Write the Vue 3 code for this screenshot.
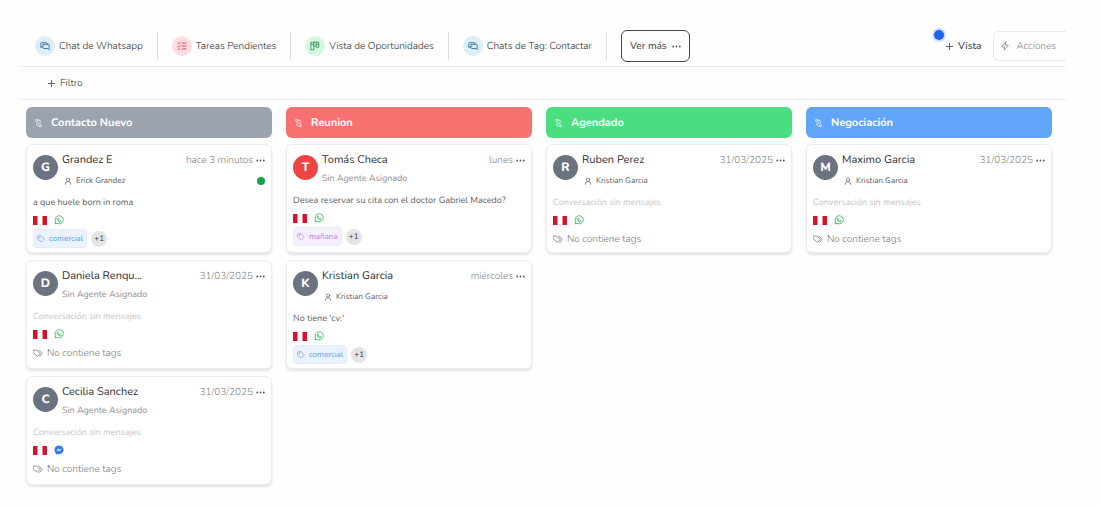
<script setup>
const views = [
  { label: 'Chat de Whatsapp', icon: 'chat', tone: 'sky' },
  { label: 'Tareas Pendientes', icon: 'tasks', tone: 'rose' },
  { label: 'Vista de Oportunidades', icon: 'board', tone: 'mint' },
  { label: 'Chats de Tag: Contactar', icon: 'chat', tone: 'sky' },
]

const columns = [
  {
    title: 'Contacto Nuevo',
    tone: 'gray',
    cards: [
      { name: 'Grandez E', agent: 'Erick Grandez', time: 'hace 3 minutos', online: true, message: 'a que huele born in roma', channel: 'whatsapp', tag: 'comercial', tagTone: 'blue', more: '+1' },
      { name: 'Daniela Renqu...', time: '31/03/2025', channel: 'whatsapp' },
      { name: 'Cecilia Sanchez', time: '31/03/2025', channel: 'messenger' },
    ],
  },
  {
    title: 'Reunion',
    tone: 'red',
    cards: [
      { name: 'Tomás Checa', time: 'lunes', accent: true, message: 'Desea reservar su cita con el doctor Gabriel Macedo?', channel: 'whatsapp', tag: 'mañana', tagTone: 'purple', more: '+1' },
      { name: 'Kristian Garcia', agent: 'Kristian Garcia', time: 'miércoles', message: "No tiene 'cv:'", channel: 'whatsapp', tag: 'comercial', tagTone: 'blue', more: '+1' },
    ],
  },
  {
    title: 'Agendado',
    tone: 'green',
    cards: [{ name: 'Ruben Perez', agent: 'Kristian Garcia', time: '31/03/2025', channel: 'whatsapp' }],
  },
  {
    title: 'Negociación',
    tone: 'blue',
    cards: [{ name: 'Maximo Garcia', agent: 'Kristian Garcia', time: '31/03/2025', channel: 'whatsapp' }],
  },
]
</script>

<template>
  <div class="page">
    <header class="toolbar">
      <nav class="views">
        <a v-for="view in views" :key="view.label" href="#" class="view">
          <span class="view-icon" :class="view.tone">
            <svg v-if="view.icon === 'chat'" viewBox="0 0 24 24" class="line-icon">
              <path d="M7 14H5l-3 2V6a2 2 0 0 1 2-2h11a2 2 0 0 1 2 2v2" />
              <path d="M9 8h11a2 2 0 0 1 2 2v11l-3-3H9a2 2 0 0 1-2-2v-6a2 2 0 0 1 2-2z" />
            </svg>
            <svg v-else-if="view.icon === 'tasks'" viewBox="0 0 24 24" class="line-icon">
              <path d="m2 5 2 2 4-4M2 13l2 2 4-4M12 5h10M12 12h10M12 19h10M3 19.500h3" />
            </svg>
            <svg v-else viewBox="0 0 24 24" class="line-icon">
              <path d="M3 3h18v12h-6v-3H9v9H3zM9 3v9M15 3v9M3 8h6M15 8h6" />
            </svg>
          </span>
          {{ view.label }}
        </a>
        <div class="more-wrap">
          <button type="button" class="more-views">
            Ver más
            <svg viewBox="0 0 10 10" class="dots"><circle cx="1.300" cy="5" r="1" /><circle cx="5" cy="5" r="1" /><circle cx="8.700" cy="5" r="1" /></svg>
          </button>
        </div>
      </nav>
      <div class="actions">
        <button type="button" class="add-view">
          <span class="pulse"></span>
          <svg viewBox="0 0 10 10" class="plus"><path d="M5 1v8M1 5h8" /></svg>
          Vista
        </button>
        <button type="button" class="run-actions">
          <svg viewBox="0 0 24 24" class="line-icon"><path d="M14 2 4 14h7l-1 8 10-12h-7z" /></svg>
          Acciones
        </button>
      </div>
    </header>

    <div class="filters">
      <button type="button" class="filter">
        <svg viewBox="0 0 10 10" class="plus"><path d="M5 1v8M1 5h8" /></svg>
        Filtro
      </button>
    </div>

    <main class="board">
      <section v-for="column in columns" :key="column.title" class="column">
        <h2 class="column-title" :class="column.tone">
          <svg viewBox="0 0 24 24" class="line-icon">
            <circle cx="7" cy="5" r="3" /><circle cx="17" cy="19" r="3" />
            <path d="M12 4h1a4 4 0 0 1 4 4v1a3 3 0 0 1-3 3h-4a3 3 0 0 0-3 3v1a4 4 0 0 0 4 4" />
          </svg>
          {{ column.title }}
        </h2>
        <article v-for="card in column.cards" :key="card.name" class="card">
          <div class="contact">
            <span class="avatar" :class="{ accent: card.accent }">{{ card.name[0] }}</span>
            <div class="identity">
              <div class="name-row">
                <h3 class="name">{{ card.name }}</h3>
                <span class="time">{{ card.time }}</span>
                <button type="button" class="menu" aria-label="Opciones">
                  <svg viewBox="0 0 10 10" class="dots"><circle cx="1.300" cy="5" r="1" /><circle cx="5" cy="5" r="1" /><circle cx="8.700" cy="5" r="1" /></svg>
                </button>
              </div>
              <div v-if="card.agent" class="agent">
                <svg viewBox="0 0 24 24" class="line-icon"><circle cx="12" cy="8" r="5" /><path d="M4 22v-1a7 7 0 0 1 7-7h2a7 7 0 0 1 7 7v1" /></svg>
                {{ card.agent }}
                <span v-if="card.online" class="online"></span>
              </div>
              <div v-else class="unassigned">Sin Agente Asignado</div>
            </div>
          </div>
          <p class="message" :class="{ empty: !card.message }">{{ card.message || 'Conversación sin mensajes' }}</p>
          <div class="channels">
            <svg viewBox="0 0 14 9" class="flag"><path d="M0 0h14v9H0z" fill="#fff" /><path d="M0 0h4.500v9H0zM9.500 0H14v9H9.500z" fill="#d5122b" /></svg>
            <svg v-if="card.channel === 'whatsapp'" viewBox="0 0 24 24" class="channel whatsapp">
              <path d="M2.500 21.500 4 16.500a9.800 9.800 0 1 1 3.700 3.600z" />
              <path d="M8.300 7.500c-1 1-.9 2.500.1 4.300 1.300 2.300 3 3.800 5.200 4.500 1.500.5 3-.2 3.200-1.800l-2.500-1.200-1.200 1.200c-1.700-.7-2.800-1.900-3.500-3.300l1-1.200-1-2.500z" />
            </svg>
            <svg v-else viewBox="0 0 24 24" class="channel">
              <path fill="#2f7df0" d="M12 1C5.500 1 1 5.600 1 11.600c0 3.200 1.300 6 3.500 7.900V23l3.400-1.700c1.300.5 2.700.7 4.100.7 6.500 0 11-4.500 11-10.400S18.500 1 12 1z" />
              <path fill="#fff" d="m5 15 5.500-6.500 3.200 2.700L19 8.500 13.500 15l-3.200-2.700z" />
            </svg>
          </div>
          <div class="tags">
            <template v-if="card.tag">
              <span class="tag" :class="card.tagTone">
                <svg viewBox="0 0 24 24" class="line-icon"><path d="M2 4a2 2 0 0 1 2-2h8l10 10-9 9L2 12z" /><circle cx="7" cy="7" r="1" /></svg>
                {{ card.tag }}
              </span>
              <span class="extra">{{ card.more }}</span>
            </template>
            <span v-else class="no-tags">
              <svg viewBox="0 0 24 24" class="line-icon"><path d="M1 5h8l8 8-6 7-10-8zM14 5l8 8-6 7" /></svg>
              No contiene tags
            </span>
          </div>
        </article>
      </section>
    </main>
  </div>
</template>

<style>
body {
  background: #fefefe;
}
</style>

<style scoped>
.page {
  margin: 0 34px 0 20px;
  padding-top: 26px;
  font-family: Nunito, Lato, "Open Sans", sans-serif;
  font-size: 10px;
  font-weight: 300;
  line-height: 14px;
  text-rendering: geometricPrecision;
  color: #2c2c30;
}
button {
  font: inherit;
  color: inherit;
  background: none;
  border: 0;
  padding: 0;
  display: flex;
  align-items: center;
  text-rendering: inherit;
}
svg {
  flex: none;
}
.line-icon {
  width: 10px;
  height: 10px;
  fill: none;
  stroke: currentColor;
  stroke-width: 2;
  stroke-linecap: round;
  stroke-linejoin: round;
}
.dots {
  width: 9px;
  height: 9px;
  fill: #55555a;
}
.plus {
  width: 9px;
  height: 9px;
  fill: none;
  stroke: #55555a;
}
.toolbar {
  display: flex;
  align-items: center;
  justify-content: space-between;
  height: 40px;
  border-bottom: 1px solid #ebebed;
}
.views,
.actions {
  display: flex;
  align-items: center;
}
.views {
  padding-left: 1px;
}
.view {
  display: flex;
  align-items: center;
  gap: 4px;
  height: 28px;
  padding: 0 14px;
  border-right: 1px solid #dcdcdf;
  color: inherit;
  text-decoration: none;
  white-space: nowrap;
}
.view-icon {
  display: grid;
  place-items: center;
  width: 20px;
  height: 20px;
  border-radius: 50%;
}
.view-icon.sky {
  background: #dceefb;
  color: #2b6894;
}
.view-icon.rose {
  background: #fddde0;
  color: #cf3844;
}
.view-icon.mint {
  background: #d5fae1;
  color: #2f8a50;
}
.more-wrap {
  padding-left: 14px;
}
.more-views {
  gap: 5px;
  height: 32px;
  padding: 0 8px;
  border: 1px solid #47474b;
  border-radius: 6px;
  color: #4b4b4f;
  font-weight: 500;
  white-space: nowrap;
}
.add-view {
  position: relative;
  gap: 4px;
  margin-right: 12px;
  color: #3d3d42;
  font-weight: 500;
}
.pulse {
  position: absolute;
  left: -11px;
  top: -9px;
  width: 10px;
  height: 10px;
  border-radius: 50%;
  background: #1b62ee;
  box-shadow: 0 0 0 2px #cfdffb;
}
.run-actions {
  gap: 6px;
  height: 30px;
  padding: 0 10px 0 6px;
  border: 1px solid #e9e9eb;
  border-right: 0;
  border-radius: 6px 0 0 6px;
  color: #88888d;
}
.filters {
  display: flex;
  align-items: center;
  height: 32px;
  padding-left: 27px;
  border-bottom: 1px solid #ebebed;
}
.filter {
  gap: 4px;
}
.board {
  display: grid;
  grid-template-columns: repeat(4, minmax(0, 1fr));
  gap: 14px;
  align-items: start;
  padding: 7px 14px 12px 6px;
}
.column-title {
  display: flex;
  align-items: center;
  gap: 8px;
  height: 31px;
  margin: 0 0 6px;
  padding: 0 8px;
  border-radius: 6px;
  color: #fff;
  font-size: 11px;
  font-weight: 700;
}
.column-title.gray {
  background: #9ca3af;
}
.column-title.red {
  background: #f87171;
}
.column-title.green {
  background: #4ade80;
}
.column-title.blue {
  background: #60a5fa;
}
.column-title .line-icon {
  width: 9px;
}
.card {
  box-sizing: border-box;
  min-height: 109px;
  margin-bottom: 7px;
  padding: 7px 6px 3px;
  border: 1px solid #ececef;
  border-radius: 6px;
  background: #fff;
  box-shadow: 0 2px 3px #0000001c;
}
.contact {
  display: flex;
  gap: 4px;
}
.avatar {
  display: grid;
  place-items: center;
  flex: none;
  width: 25px;
  height: 25px;
  margin-top: 3px;
  border-radius: 50%;
  background: #6b7280;
  color: #fff;
  font-size: 12px;
  font-weight: 800;
}
.avatar.accent {
  background: #ef4444;
}
.identity {
  flex: 1;
  min-width: 0;
}
.name-row {
  display: flex;
  align-items: center;
  height: 16px;
}
.name {
  flex: 1;
  margin: 0;
  color: #2c2c31;
  font-size: 11px;
  font-weight: 400;
  white-space: nowrap;
}
.time {
  color: #7f7f85;
}
.menu {
  padding-left: 3px;
}
.agent,
.unassigned {
  height: 16px;
  margin-top: 3px;
  line-height: 16px;
  font-size: 9px;
  font-weight: 400;
  color: #8e8e94;
}
.agent {
  display: flex;
  align-items: center;
  gap: 4px;
  margin-top: 5px;
  padding-left: 2px;
  color: #5b5b61;
  font-size: 8px;
}
.agent .line-icon {
  width: 8px;
  height: 8px;
}
.online {
  width: 8px;
  height: 8px;
  margin-left: auto;
  border-radius: 50%;
  background: #16a34a;
}
.message {
  margin: 7px 0 0;
  font-size: 9px;
  font-weight: 400;
  white-space: nowrap;
  color: #5f5f64;
}
.message.empty {
  color: #c5c5c9;
}
.channels {
  display: flex;
  align-items: center;
  gap: 7px;
  height: 12px;
  margin-top: 4px;
}
.flag {
  width: 14px;
  height: 9px;
}
.channel {
  width: 10px;
  height: 10px;
}
.whatsapp {
  fill: none;
  stroke: #35b85c;
  stroke-width: 2;
}
.tags {
  display: flex;
  align-items: center;
  gap: 4px;
  height: 19px;
  margin-top: 3px;
}
.tag {
  display: flex;
  align-items: center;
  gap: 4px;
  height: 17px;
  padding: 0 3px;
  border: 1px solid #e6ecf7;
  border-radius: 3px;
  font-size: 8px;
  font-weight: 400;
}
.tag .line-icon {
  width: 8px;
  height: 8px;
}
.tag.blue {
  background: #ecf2fd;
  color: #5a9cf3;
}
.tag.purple {
  background: #f6f0fe;
  color: #b97af0;
}
.extra {
  display: grid;
  place-items: center;
  width: 16px;
  height: 16px;
  border-radius: 50%;
  background: #e3e4e7;
  font-size: 8px;
  font-weight: 400;
}
.no-tags {
  display: flex;
  align-items: center;
  gap: 4px;
  color: #7c7c82;
}
</style>
